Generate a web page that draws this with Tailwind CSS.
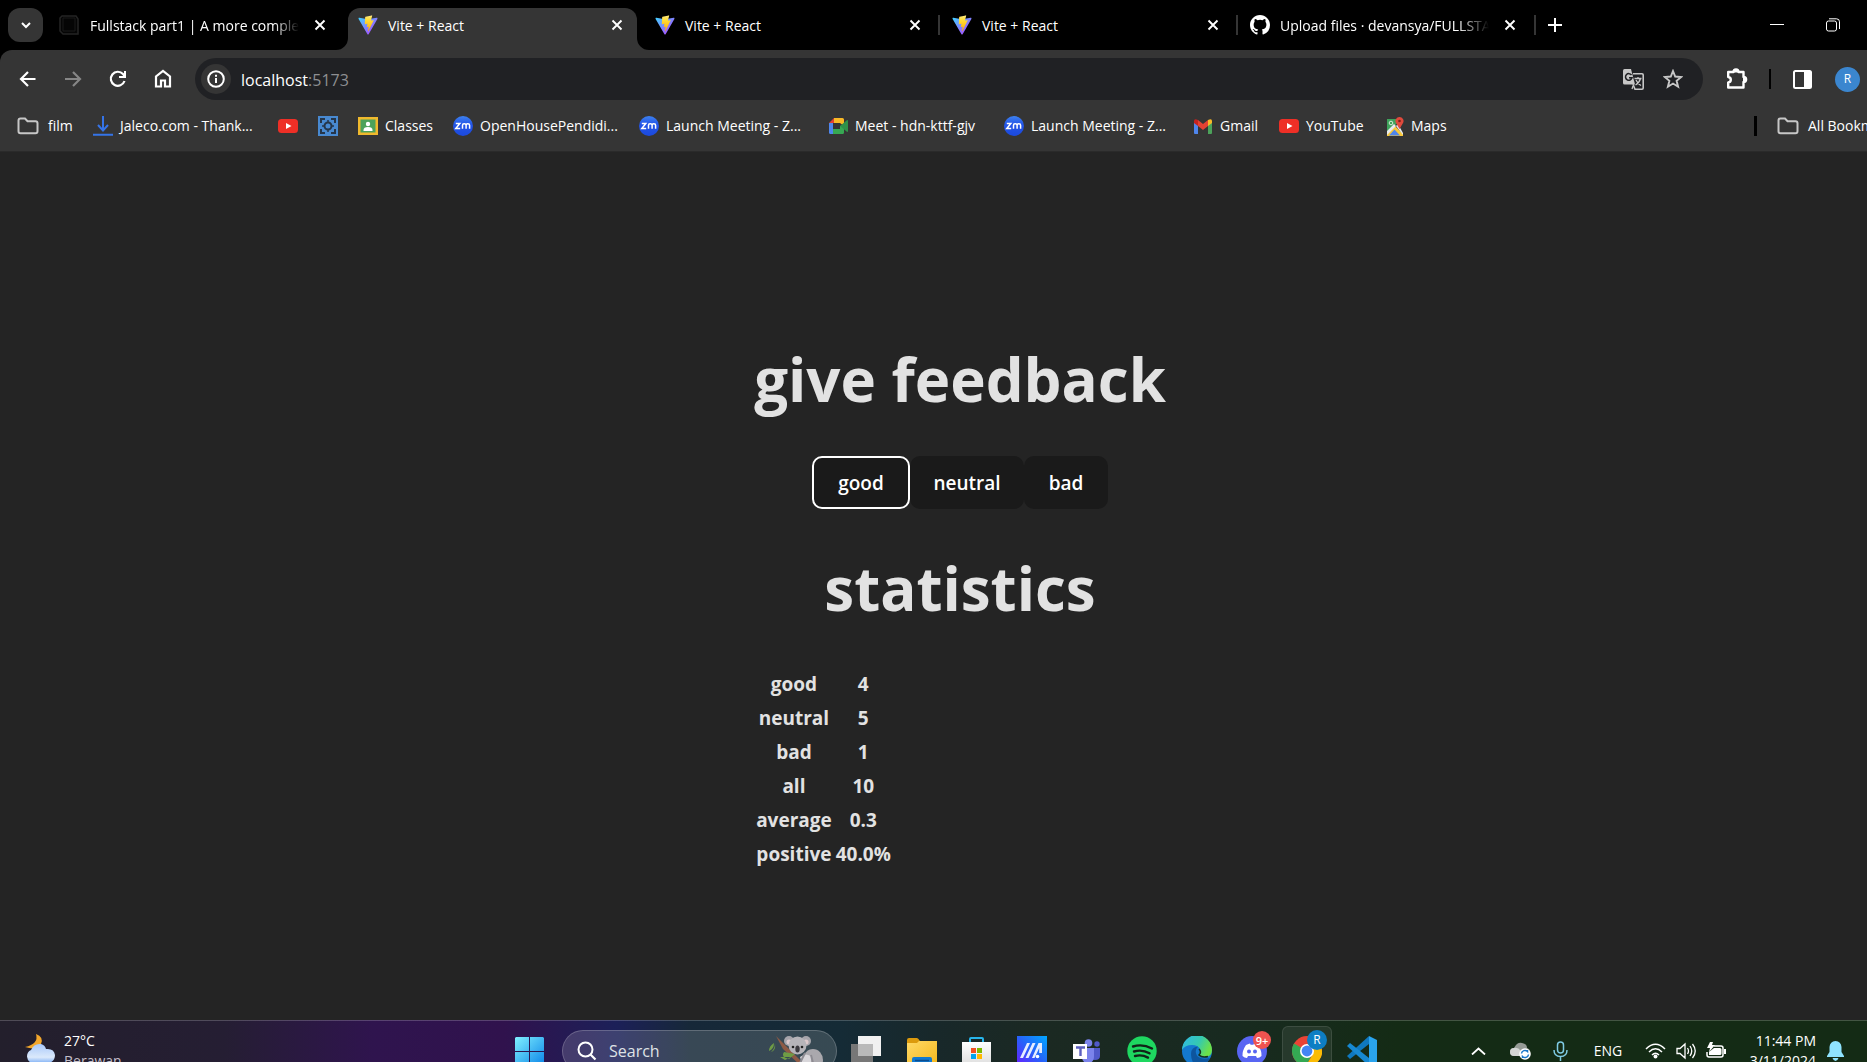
<!DOCTYPE html>
<html lang="en">
<head>
<meta charset="utf-8">
<title>Vite + React</title>
<script src="https://cdn.jsdelivr.net/npm/@tailwindcss/browser@4"></script>
</head>
<body class="flex h-screen flex-col overflow-hidden bg-black font-['Open_Sans',sans-serif] text-white">
<svg class="absolute size-0" aria-hidden="true">
  <defs>
    <linearGradient id="va" x1="0" y1="0" x2="1" y2="1"><stop offset="0" stop-color="#41d1ff"/><stop offset="1" stop-color="#bd34fe"/></linearGradient>
    <linearGradient id="vb" x1="0" y1="0" x2="0" y2="1"><stop offset="0" stop-color="#ffea83"/><stop offset=".3" stop-color="#ffdd35"/><stop offset="1" stop-color="#ffa800"/></linearGradient>
    <linearGradient id="zg" x1="0" y1="0" x2="0" y2="1"><stop offset="0" stop-color="#3d82f0"/><stop offset=".4" stop-color="#2456e8"/><stop offset="1" stop-color="#1b49dd"/></linearGradient>
    <linearGradient id="win" x1="0" y1="0" x2="1" y2="1"><stop offset="0" stop-color="#80f0ff"/><stop offset="1" stop-color="#0a84e8"/></linearGradient>
    <linearGradient id="cloud" x1="0" y1="0" x2="0" y2="1"><stop offset="0" stop-color="#a8c8fa"/><stop offset=".7" stop-color="#dbe9fb"/><stop offset="1" stop-color="#7fb0f5"/></linearGradient>
    <linearGradient id="asus" x1="0" y1="1" x2="1" y2="0"><stop offset="0" stop-color="#6a1cff"/><stop offset=".5" stop-color="#2762fa"/><stop offset="1" stop-color="#00a8ff"/></linearGradient>
    <linearGradient id="edge1" x1="0" y1="0" x2="1" y2=".4"><stop offset="0" stop-color="#2fb8e8"/><stop offset=".6" stop-color="#35c9b0"/><stop offset="1" stop-color="#6be04a"/></linearGradient>
    <linearGradient id="fold" x1="0" y1="0" x2="1" y2="1"><stop offset="0" stop-color="#ffd967"/><stop offset="1" stop-color="#f5b81c"/></linearGradient>
    <linearGradient id="bag" x1="0" y1="0" x2="0" y2="1"><stop offset="0" stop-color="#fff"/><stop offset="1" stop-color="#dcdcdc"/></linearGradient>
    <symbol id="vite" viewBox="0 0 32 32"><path fill="url(#va)" d="M31 6.2 17 30.6c-.4.7-1.500.7-1.900 0L1 6.200C.5 5.300 1.300 4.300 2.200 4.500l13.700 2.400 13.900-2.400c1-.2 1.700.8 1.200 1.700z"/><path fill="url(#vb)" d="m22 .6-10 2a.6.600 0 0 0-.5.500L10.900 14c0 .4.300.7.700.6l2.800-.6c.4-.1.700.2.600.6l-.8 4c-.1.400.2.700.6.600l1.700-.5c.400-.1.700.2.600.6l-1.300 6.300c-.1.500.500.700.7.300l8.500-17c.1-.400-.1-.800-.6-.700l-3 .6c-.4.100-.700-.200-.600-.6l1.900-7c.1-.400-.300-.800-.7-.6z"/></symbol>
    <symbol id="close" viewBox="0 0 12 12"><path d="M1.500 1.500l9 9M10.500 1.500l-9 9" stroke="#fff" stroke-width="1.900"/></symbol>
    <symbol id="folder" viewBox="0 0 22 18"><path d="M1.500 3.500q0-2 2-2H8l2.500 2.700h8q2 0 2 2v8q0 2-2 2h-15q-2 0-2-2z" fill="none" stroke="#c7c7c7" stroke-width="2"/></symbol>
    <symbol id="yt" viewBox="0 0 20 14"><rect width="20" height="14" rx="3.500" fill="#ee2f26"/><path d="M8 4l5.500 3L8 10z" fill="#fff"/></symbol>
    <symbol id="zm" viewBox="0 0 20 20"><circle cx="10" cy="10" r="10" fill="url(#zg)"/><path d="M2.800 7.500h4l-4 5h4.400M9.500 12.800V9.300q0-1.500 1.500-1.500h.4q1.700 0 1.700 1.500v3.500m0-3.500q0-1.500 1.500-1.500h.3q1.700 0 1.700 1.500v3.500" fill="none" stroke="#fff" stroke-width="1.500"/></symbol>
    <symbol id="github" viewBox="0 0 16 16"><path fill="#fff" d="M8 0C3.580 0 0 3.580 0 8c0 3.540 2.290 6.530 5.470 7.590.4.070.55-.17.550-.380 0-.190-.010-.820-.010-1.490-2.010.370-2.530-.490-2.690-.940-.090-.230-.480-.940-.820-1.130-.280-.150-.680-.520-.010-.530.630-.010 1.080.580 1.230.820.720 1.210 1.870.870 2.330.660.070-.520.280-.870.510-1.070-1.780-.2-3.640-.890-3.640-3.950 0-.870.310-1.590.820-2.150-.080-.2-.360-1.020.080-2.120 0 0 .670-.210 2.200.820a7.400 7.400 0 0 1 4 0c1.530-1.040 2.200-.820 2.200-.820.440 1.100.160 1.920.080 2.120.510.560.820 1.270.820 2.150 0 3.070-1.870 3.750-3.650 3.950.290.250.540.730.540 1.480 0 1.070-.010 1.930-.010 2.200 0 .210.150.460.550.380A8 8 0 0 0 16 8c0-4.420-3.580-8-8-8z"/></symbol>
  </defs>
</svg>

<!-- Tab strip -->
<header class="flex h-[50px] shrink-0 bg-black pl-2 text-sm">
  <button aria-label="Search tabs" class="mt-2 mr-1 flex h-[34px] w-[35px] shrink-0 items-center justify-center rounded-xl bg-[#353535]"><svg class="size-3" viewBox="0 0 12 12"><path d="M2 4l4 4 4-4" fill="none" stroke="#fff" stroke-width="2"/></svg></button>
  <nav class="flex [&_a]:pt-px">
    <div class="flex w-[301px] items-center pr-5 pl-3">
      <svg class="mr-[11px] size-5 shrink-0" viewBox="0 0 20 20"><path d="M3 1h14l2 3v15H4l-3-3V3z" fill="#050505" stroke="#242424" stroke-width="1.500"/><path d="M4 3h12v13H4z" fill="none" stroke="#1a1a1a"/></svg>
      <a href="#" class="w-[209px] overflow-hidden [mask-image:linear-gradient(to_right,#000_88%,transparent)] whitespace-nowrap">Fullstack part1 | A more complex</a>
      <button aria-label="Close tab" class="ml-[15px]"><svg class="size-3"><use href="#close"/></svg></button>
    </div>
    <div class="relative mt-2 flex w-[289px] items-center rounded-t-xl bg-[#353535] pr-[14px] pb-2 pl-[10px]">
      <svg class="absolute bottom-0 -left-3 size-3" viewBox="0 0 12 12"><path d="M12 0v12H0A12 12 0 0 0 12 0" fill="#353535"/></svg>
      <svg class="absolute -right-3 bottom-0 size-3" viewBox="0 0 12 12"><path d="M0 0v12h12A12 12 0 0 1 0 0" fill="#353535"/></svg>
      <svg class="mr-[10px] size-5"><use href="#vite"/></svg><a href="#" class="grow">Vite + React</a>
      <button aria-label="Close tab"><svg class="size-3"><use href="#close"/></svg></button>
    </div>
    <div class="flex w-[303px] items-center pl-[18px]">
      <svg class="mr-[10px] size-5"><use href="#vite"/></svg><a href="#" class="grow">Vite + React</a>
      <button aria-label="Close tab"><svg class="size-3"><use href="#close"/></svg></button>
      <span class="ml-[17px] h-5 w-[2px] bg-[#353535]"></span>
    </div>
    <div class="flex w-[298px] items-center pl-[12px]">
      <svg class="mr-[10px] size-5"><use href="#vite"/></svg><a href="#" class="grow">Vite + React</a>
      <button aria-label="Close tab"><svg class="size-3"><use href="#close"/></svg></button>
      <span class="ml-[17px] h-5 w-[2px] bg-[#353535]"></span>
    </div>
    <div class="flex w-[298px] items-center pl-[12px]">
      <svg class="mr-[10px] size-5 shrink-0"><use href="#github"/></svg><a href="#" class="w-[209px] overflow-hidden [mask-image:linear-gradient(to_right,#000_85%,transparent)] whitespace-nowrap">Upload files · devansya/FULLSTA</a>
      <button aria-label="Close tab" class="ml-[15px]"><svg class="size-3"><use href="#close"/></svg></button>
      <span class="ml-auto h-5 w-[2px] bg-[#353535]"></span>
    </div>
  </nav>
  <button aria-label="New tab" class="ml-3"><svg class="size-[14px]" viewBox="0 0 14 14"><path d="M7 0v14M0 7h14" stroke="#fff" stroke-width="2"/></svg></button>
  <div class="ml-auto flex items-center gap-[42px] pr-[27px]">
    <button aria-label="Minimize"><svg class="size-[14px]" viewBox="0 0 14 14"><path d="M0 6.500h14" stroke="#fff"/></svg></button>
    <button aria-label="Restore"><svg class="size-[14px]" viewBox="0 0 14 14"><rect x=".5" y="3" width="10" height="10" rx="2" fill="none" stroke="#fff"/><path d="M3 .8h7.500q3 0 3 3V11" fill="none" stroke="#fff"/></svg></button>
  </div>
</header>

<!-- Toolbar and bookmarks -->
<section class="shrink-0 overflow-hidden rounded-tl-xl border-b border-[#2a2a2a] bg-[#353535] pt-2">
  <div class="flex h-[42px] items-center pr-[7px] pl-[18px]">
    <div class="flex w-[177px] gap-[25px]">
      <button aria-label="Back"><svg class="size-5" viewBox="0 0 20 20"><path d="M17.500 10H3M10 3l-7 7 7 7" fill="none" stroke="#fff" stroke-width="2.200"/></svg></button>
      <button aria-label="Forward"><svg class="size-5" viewBox="0 0 20 20"><path d="M2 10h15M10 3l7 7-7 7" fill="none" stroke="#868686" stroke-width="2.200"/></svg></button>
      <button aria-label="Reload"><svg class="size-5" viewBox="0 0 20 20"><path d="M16.500 12A7 7 0 1 1 15 5l2 2.500" fill="none" stroke="#fff" stroke-width="2.200"/><path d="M18 2v7h-7V7h5V2z" fill="#fff"/></svg></button>
      <button aria-label="Home"><svg class="size-5" viewBox="0 0 20 20"><path d="M3 17.500V7.500L10 2l7 5.500v10h-5v-6H8v6z" fill="none" stroke="#fff" stroke-width="2.200"/></svg></button>
    </div>
    <div class="flex h-[42px] grow items-center rounded-full bg-[#202124] pr-5 pl-[6px]">
      <button aria-label="View site information" class="mr-[10px] flex size-[30px] items-center justify-center rounded-full bg-[#353535]"><svg class="size-[18px]" viewBox="0 0 18 18"><circle cx="9" cy="9" r="7.800" fill="none" stroke="#fff" stroke-width="2"/><path d="M9 8v5M9 4.800v2" stroke="#fff" stroke-width="2"/></svg></button>
      <div class="grow pt-px text-base" role="textbox" aria-label="Address">localhost<span class="text-[#8e8f92]">:5173</span></div>
      <button aria-label="Translate" class="mr-[19px]"><svg class="size-[21px]" viewBox="0 0 21 21"><path d="M10 4.800h9q1.200 0 1.200 1.200v13q0 1.200-1.200 1.200h-7l-2-5" fill="none" stroke="#c7c7c7" stroke-width="1.600"/><path d="M1.500 0H8l4 15.500H1.500Q0 15.500 0 14V1.500Q0 0 1.500 0z" fill="#c7c7c7"/><path d="M8.500 6A3.300 3.300 0 1 0 9 8.800H6" fill="none" stroke="#202124" stroke-width="1.500"/><path d="M11.500 9.500h7M15 8v1.500M17.500 9.500q-1 4-5 6.500M13 11q1.500 3.500 5 5.500M10 17l-1 3" fill="none" stroke="#c7c7c7" stroke-width="1.300"/></svg></button>
      <button aria-label="Bookmark this tab"><svg class="size-5" viewBox="0 0 20 20"><path d="M10 2l2.200 5.500 6 .5-4.600 3.800 1.500 5.900L10 14.500l-5.100 3.200 1.500-5.900L1.800 8l6-.5z" fill="none" stroke="#c7c7c7" stroke-width="1.900"/></svg></button>
    </div>
    <button aria-label="Extensions" class="ml-[23px]"><svg class="size-[22px]" viewBox="0 0 22 22"><path d="M2.200 4h5.300q0-2.600 2.500-2.600T12.500 4h5v5q2.600 0 2.600 2.500T17.500 14v5.500H2.200v-5q2.600-.4 2.600-2.800T2.200 9z" fill="none" stroke="#fff" stroke-width="2.400" stroke-linejoin="round"/><path d="M8 4.500q0-3 2-3t2 3zM17 9.500q3 0 3 2t-3 2z" fill="#fff"/></svg></button>
    <span class="mr-[22px] ml-[21px] h-5 w-[2px] bg-black"></span>
    <button aria-label="Side panel"><svg class="w-[19px]" viewBox="0 0 19 19"><rect x="1" y="1" width="17" height="17" rx="1.500" fill="none" stroke="#fff" stroke-width="2"/><path d="M11 1h7v17h-7z" fill="#fff"/></svg></button>
    <button aria-label="Profile" class="ml-[23px] size-[25px] shrink-0 rounded-full bg-[#3b86cf] text-xs">R</button>
  </div>
  <nav aria-label="Bookmarks" class="flex h-[51px] items-center pt-px pl-[17px] text-sm whitespace-nowrap [&>a]:flex [&>a]:shrink-0 [&>a]:items-center [&>a]:gap-[7px]">
    <a href="#" class="w-[76px]"><svg class="mr-[2px] h-[18px] w-[22px]"><use href="#folder"/></svg>film</a>
    <a href="#" class="w-[185px]"><svg class="size-5" viewBox="0 0 20 20"><path d="M10 0v13M5 9l5 5.500L15 9M0 18.800h20" fill="none" stroke="#3574e8" stroke-width="2"/></svg>Jaleco.com - Thank...</a>
    <a href="#" class="w-10" aria-label="YouTube"><svg class="h-[14px] w-5"><use href="#yt"/></svg></a>
    <a href="#" class="w-10" aria-label="Capture"><svg class="size-5" viewBox="0 0 20 20"><path fill="#4889d0" d="M0 0h20v20H0z"/><path d="M3 7V3h4M13 3h4v4M17 13v4h-4M7 17H3v-4" fill="none" stroke="#25364a" stroke-width="2"/><circle cx="10" cy="10" r="3.500" fill="none" stroke="#25364a" stroke-width="2"/><path d="M10 4v3M10 13v3M4 10h3M13 10h3" stroke="#25364a" stroke-width="1.500"/></svg></a>
    <a href="#" class="w-[95px]"><svg class="h-[18px] w-5" viewBox="0 0 20 18"><path fill="#f0b92d" d="M0 0h20v18H0z"/><path fill="#4ca25a" d="M2.500 2.500h15v13h-15z"/><circle cx="10" cy="7" r="2.200" fill="#fff"/><path fill="#fff" d="M5.500 13q0-3 4.500-3t4.500 3v1h-9z"/></svg>Classes</a>
    <a href="#" class="w-[186px]"><svg class="size-5"><use href="#zm"/></svg>OpenHousePendidi...</a>
    <a href="#" class="w-[190px]"><svg class="size-5"><use href="#zm"/></svg>Launch Meeting - Z...</a>
    <a href="#" class="w-[175px]"><svg class="h-4 w-[19px]" viewBox="0 0 19 16"><path fill="#4f86ec" d="M0 5h4v11H1.500Q0 16 0 14.500z"/><path fill="#e34133" d="M5 0v5H0z"/><path fill="#f9b927" d="M5 0h8.500Q15 0 15 1.500V8l-4-3H5z"/><path fill="#37a853" d="M4 11h7V8l4-1v7.500q0 1.500-1.500 1.500H4z"/><path fill="#2f9149" d="M11 8l6.500-5.500q1.500-1 1.500.5v10q0 1.500-1.500.5z"/></svg>Meet - hdn-kttf-gjv</a>
    <a href="#" class="w-[189px]"><svg class="size-5"><use href="#zm"/></svg>Launch Meeting - Z...</a>
    <a href="#" class="w-[86px]"><svg class="h-[15px] w-5" viewBox="0 0 20 15"><path fill="#4f86ec" d="M1 3l4 3v9H2q-1 0-1-1z"/><path fill="#4ca25a" d="M15 6l4-3v11q0 1-1 1h-3z"/><path fill="#e34133" d="M5 1l5 4 5-4v6l-5 4-5-4z"/><path fill="#c5221f" d="M1 2q0-3 4-1v6L1 4z"/><path fill="#f9b927" d="M19 2q0-3-4-1v6l4-3z"/></svg>Gmail</a>
    <a href="#" class="w-[107px]"><svg class="h-[14px] w-5"><use href="#yt"/></svg>YouTube</a>
    <a href="#"><svg class="h-[19px] w-[18px]" viewBox="0 0 18 19"><path fill="#3fa35b" d="M1 2h14L1 17z"/><path fill="#f9c93a" d="M1 15l7-7 9 9v2H1z"/><path fill="#4f86ec" d="M3 18.500l5.500-6 5.500 6z"/><path fill="#e8eaed" d="M1 14l7-7 2 2-9 9zM10 9l2-2 5 9v2z"/><circle cx="5" cy="6" r="1.800" fill="none" stroke="#d5ecd8"/><path fill="#e04a3c" d="M13.500 0A4 4 0 0 1 17 6l-3.500 6L10 6a4 4 0 0 1 3.500-6z"/><circle cx="13.500" cy="4" r="1.300" fill="#7c2019"/></svg>Maps</a>
    <span class="ml-auto h-5 w-[3px] shrink-0 bg-black"></span>
    <a href="#" class="ml-[20px] w-[90px] overflow-hidden"><svg class="mr-[2px] h-[18px] w-[22px] shrink-0"><use href="#folder"/></svg>All Bookmarks</a>
  </nav>
</section>

<!-- Application -->
<main class="flex min-h-0 grow justify-center overflow-hidden bg-[#242424] pt-[192px] pl-[53px] font-bold text-[#e2e2e2]">
  <div>
    <h1 class="text-center text-[60px] leading-[70px]">give feedback</h1>
    <div class="mt-[42px] flex justify-center text-[19px] leading-[29px] font-semibold text-white">
      <button class="w-[98px] rounded-[10px] bg-[#1a1a1a] pt-[13px] pb-[11px] outline-2 -outline-offset-2 outline-white">good</button>
      <button class="w-[114px] rounded-[10px] bg-[#1a1a1a] pt-[13px] pb-[11px]">neutral</button>
      <button class="w-[84px] rounded-[10px] bg-[#1a1a1a] pt-[13px] pb-[11px]">bad</button>
    </div>
    <h1 class="mt-[44px] text-center text-[60px] leading-[70px]">statistics</h1>
    <table class="mt-[44px] text-center text-[19px] leading-[30px]">
      <tbody>
        <tr><td class="px-[2px] py-[2px]">good</td><td class="px-[2px]">4</td></tr>
        <tr><td class="px-[2px] py-[2px]">neutral</td><td class="px-[2px]">5</td></tr>
        <tr><td class="px-[2px] py-[2px]">bad</td><td class="px-[2px]">1</td></tr>
        <tr><td class="px-[2px] py-[2px]">all</td><td class="px-[2px]">10</td></tr>
        <tr><td class="px-[2px] py-[2px]">average</td><td class="px-[2px]">0.3</td></tr>
        <tr><td class="px-[2px] py-[2px]">positive</td><td class="px-[2px]">40.0%</td></tr>
      </tbody>
    </table>
  </div>
</main>

<!-- Taskbar -->
<footer class="h-[42px] shrink-0 overflow-hidden border-t border-white/20 bg-[linear-gradient(90deg,#231f2c_0%,#251e33_12%,#2f144e_20%,#30124d_27%,#1c2058_33%,#162838_37%,#152b36_45%,#18282a_50%,#1b2922_56%,#182a20_66%,#142b15_75%,#142b15_100%)]">
  <div class="flex h-[60px] items-center">
    <button class="flex w-[490px] items-center gap-[9px] pb-px pl-[25px] text-left text-sm leading-[20px]">
      <svg class="h-[34px] w-[30px]" viewBox="0 0 30 34"><path d="M11 0q8 3 5 10-3 7-16 3Q14 10 11 0z" fill="#f3a72c"/><path d="M7 29a7 7 0 0 1-1-13q3-7 10-6 4 1 5 5 8-1 9 6 0 7-7 8z" fill="url(#cloud)"/></svg>
      <span>27°C<br><span class="text-[#c4bfca]">Berawan</span></span>
    </button>
    <div class="flex items-center">
      <button aria-label="Start" class="ml-[25px]"><svg class="size-[29px]" viewBox="0 0 29 29"><path fill="url(#win)" d="M1 0h13v14H0V1zM15 0h13l1 1v13H15zM0 15h14v14H1l-1-1zM15 15h14v13l-1 1H15z"/></svg></button>
      <label class="ml-[18px] flex h-[42px] w-[275px] items-center rounded-full border border-white/20 bg-white/15 pl-[14px]">
        <svg class="mr-[12px] size-5 shrink-0" viewBox="0 0 20 20"><circle cx="8.500" cy="8.500" r="7" fill="none" stroke="#fff" stroke-width="2"/><path d="M13.500 13.500l5 5" stroke="#fff" stroke-width="2.200"/></svg>
        <input aria-label="Search" placeholder="Search" class="w-[140px] bg-transparent text-base outline-none placeholder:text-[#dfe2e6]">
        <svg class="ml-[20px] h-[32px] w-[54px] shrink-0" viewBox="0 0 54 32"><path d="M7 1l9 9 20 20-3 2L14 14z" fill="#8e5a45"/><path d="M5 8q-5 3-5 8 5-2 5-8zM6 8q0 6-4 9 5-1 4-9zM15 17q-4 5 5 7l6-5q-5-1-11-2zM11 22h11l-6 3z" fill="#6f9c45"/><ellipse cx="44" cy="25" rx="10" ry="11" fill="#aaa8ad"/><circle cx="20" cy="6" r="5" fill="#a7a5ab"/><circle cx="37" cy="6" r="5" fill="#a7a5ab"/><circle cx="20" cy="7" r="2.500" fill="#dcc9cc"/><circle cx="37" cy="7" r="2.500" fill="#dcc9cc"/><ellipse cx="28.500" cy="10.500" rx="9" ry="9" fill="#b6b4b9"/><circle cx="24" cy="12" r="1.300" fill="#222"/><circle cx="33" cy="12" r="1.300" fill="#222"/><ellipse cx="28.500" cy="14" rx="2.200" ry="3.500" fill="#3c3a40"/><path d="M31 22q6-5 12 0l-2 10h-7z" fill="#d8d6da"/><path d="M36 18l-6 12M42 20l3 12" stroke="#8d8b92" stroke-width="2"/></svg>
      </label>
      <button aria-label="Task view" class="ml-[14px]"><svg class="size-[30px]" viewBox="0 0 30 30"><path d="M7 0h23v20H7z" fill="#f1f1f1"/><path d="M0 8h22v20H0z" fill="#777"/><path d="M7 8h15v12H7z" fill="#b9b9b9"/></svg></button>
      <button aria-label="File Explorer" class="ml-[26px]"><svg class="size-[30px]" viewBox="0 0 30 30"><path d="M0 4q0-2 2-2h8q1 0 3 3h15q2 0 2 2v4H0z" fill="#dc9a0d"/><path d="M0 7h10l2-2h18v24H0z" fill="url(#fold)"/><path d="M5 30V23q0-2 2-2h16q2 0 2 2v7z" fill="#1279cf"/><path d="M8 24.500h14" stroke="#0b4d90" stroke-width="1.500"/></svg></button>
      <button aria-label="Microsoft Store" class="ml-[25px]"><svg class="size-[29px]" viewBox="0 0 29 29"><path d="M8 6V2q0-1 1-1h11q1 0 1 1v4" fill="none" stroke="#27b5eb" stroke-width="2"/><path d="M0 5h29v21q0 3-3 3H3q-3 0-3-3z" fill="url(#bag)"/><path fill="#f25022" d="M9 11h5v5H9z"/><path fill="#7fba00" d="M15 11h5v5h-5z"/><path fill="#00a4ef" d="M9 17h5v5H9z"/><path fill="#ffb900" d="M15 17h5v5h-5z"/></svg></button>
      <button aria-label="MyASUS" class="ml-[26px]"><svg class="size-[30px]" viewBox="0 0 30 30"><path fill="url(#asus)" d="M0 0h30v30H0z"/><path d="M3 22L10 7h3L6 22zM8.500 22L15.500 7h3l-7 15zM15 22L21.500 7H25v10h-2.800v-5L17.500 22z" fill="#e6edff"/><circle cx="20.500" cy="20.500" r="1.800" fill="#fff"/></svg></button>
      <button aria-label="Teams" class="ml-[26px]"><svg class="h-[24px] w-[28px]" viewBox="0 0 28 24"><circle cx="15.500" cy="4" r="3.800" fill="#7b83eb"/><circle cx="24" cy="5" r="2.700" fill="#5059c9"/><path d="M18 9h9v8q0 4-5 4t-5-4z" fill="#5059c9"/><path d="M9 9h12v8q0 7-6 7t-6-6z" fill="#7b83eb"/><path d="M0 5h14v15H0z" fill="#fff"/><path d="M3 8.500h9M7.500 8.500V17" stroke="#5c5fbf" stroke-width="2.400"/></svg></button>
      <button aria-label="Spotify" class="ml-[26px]"><svg class="size-[30px]" viewBox="0 0 30 30"><circle cx="15" cy="15" r="14.700" fill="#1ed760"/><path d="M6 10.500q9.500-3 19 2M7 15.500q8-2.500 15.500 1.800M8 20q7-1.800 13 1.600" fill="none" stroke="#112318" stroke-width="2.400" stroke-linecap="round"/></svg></button>
      <button aria-label="Edge" class="ml-[25px]"><svg class="size-[30px]" viewBox="0 0 30 30"><circle cx="15" cy="15" r="15" fill="#1479cf"/><path d="M0 14A15 15 0 0 1 30 14q0 7-7 7-6 0-6-3 2-2 1-5-2-4-8-4Q3 9 0 14z" fill="url(#edge1)"/><path d="M9 18q0-7 7-7.500-3 3-2 7 2 7 14 4.500-4 8-13 8-6-3-6-12z" fill="#0d559e"/><path d="M17 13q3 3 0 6 3 3 9 1.500" fill="none" stroke="#173020" stroke-width="1.500"/></svg></button>
      <button aria-label="Discord" class="relative ml-[25px]"><svg class="size-[30px]" viewBox="0 0 30 30"><circle cx="15" cy="15" r="15" fill="#5865f2"/><path d="M9 9q3-1.500 4-1.500l.6 1.200h2.800L17 7.500q1 0 4 1.500 4 6 3.500 11-2 1.800-4.500 2l-1-2h-8l-1 2q-2.500-.2-4.500-2Q5 15 9 9z" fill="#fff"/><circle cx="12" cy="15.500" r="2" fill="#5865f2"/><circle cx="18" cy="15.500" r="2" fill="#5865f2"/></svg><span class="absolute -top-[5px] -right-[4px] flex size-[18px] items-center justify-center rounded-full bg-[#ef5350] text-[11px] leading-none font-semibold">9+</span></button>
      <button aria-label="Chrome" class="relative ml-[15px] flex size-[50px] items-center justify-center rounded-md border border-white/10 bg-white/7"><svg class="size-[30px]" viewBox="0 0 30 30"><circle cx="15" cy="15" r="15" fill="#ea4335"/><path d="M15 15L2 7.500A15 15 0 0 0 14 30l6-11z" fill="#34a853"/><path d="M15 15h14.900Q30 8 29 9A15 15 0 0 1 14 30l7-12z" fill="#fbbc05"/><path d="M18 8h10a15 15 0 0 1 2 7H18z" fill="#fbbc05"/><circle cx="15" cy="15" r="7" fill="#fff"/><circle cx="15" cy="15" r="5.400" fill="#4285f4"/></svg><span class="absolute top-[3px] right-[4px] flex size-[20px] items-center justify-center rounded-full bg-[#0d7ec4] text-xs">R</span></button>
      <button aria-label="Visual Studio Code" class="ml-[15px]"><svg class="size-[30px]" viewBox="0 0 30 30"><path d="M22 0l8 4v22l-8 4z" fill="#2aa4ee"/><path d="M22 0v8L3 23 0 20z" fill="#0f78bf"/><path d="M3 7l19 15v8L0 10z" fill="#1788d1"/></svg></button>
    </div>
    <div class="ml-auto flex items-center pb-px text-sm">
      <button aria-label="Show hidden icons" class="mr-[24px]"><svg class="h-2 w-[15px]" viewBox="0 0 15 8"><path d="M1 7.500l6.500-6 6.500 6" fill="none" stroke="#fff" stroke-width="1.800"/></svg></button>
      <button aria-label="OneDrive" class="mr-[22px]"><svg class="h-[18px] w-[21px]" viewBox="0 0 21 18"><path d="M4 14a4 4 0 0 1 0-8Q7 0 12 1q5 1 5 5 3 1 3 4t-3 4z" fill="#969b96"/><path d="M4 14a4 4 0 0 1 0-8q4-1 7 3v5z" fill="#d4d6d4"/><circle cx="15" cy="12" r="5.800" fill="#fff"/><path d="M11.500 11.500a3.500 3.500 0 0 1 6-2V8M18.500 12.500a3.500 3.500 0 0 1-6 2V16" fill="none" stroke="#1674c8" stroke-width="1.500"/></svg></button>
      <button aria-label="Microphone" class="mr-[25px]"><svg class="h-5 w-[15px]" viewBox="0 0 15 20"><rect x="4.500" y="1" width="6" height="11" rx="3" fill="none" stroke="#7fcbe4" stroke-width="1.500"/><path d="M1 9q0 6.500 6.500 6.500T14 9M7.500 15.500V20" fill="none" stroke="#7fcbe4" stroke-width="1.500"/></svg></button>
      <button class="mr-[22px] w-[30px]">ENG</button>
      <button aria-label="Network, sound and battery" class="mr-[14px] flex items-center gap-[10px]">
        <svg class="h-4 w-[21px]" viewBox="0 0 21 16"><path d="M1 6q9.500-9.500 19 0M4 9q6.500-6.500 13 0M7 12q3.500-3.500 7 0" fill="none" stroke="#fff" stroke-width="1.500"/><circle cx="10.500" cy="13.500" r="2" fill="#fff"/></svg>
        <svg class="h-[18px] w-[20px]" viewBox="0 0 20 18"><path d="M1 6.500h3l5-4.500v14l-5-4.500H1zM11.500 6q2 3 0 6M14 4q3.500 5 0 10M16.500 2q5.500 7 0 14" fill="none" stroke="#fff" stroke-width="1.300"/></svg>
        <svg class="h-[18px] w-[20px]" viewBox="0 0 20 18"><path d="M8 4h7q2 0 2 2v7q0 2-2 2H3q-2 0-2-2v-3" fill="none" stroke="#fff" stroke-width="1.500"/><path d="M3 13v-3l5-4h6q1.500 0 1.500 1.500v4q0 1.500-1.500 1.500zM18 7h2v5h-2zM4 0h3L6 3h3L3 10l1-4H1z" fill="#fff"/></svg>
      </button>
      <button class="w-[76px] text-right leading-[20px] whitespace-nowrap">11:44 PM<br>3/11/2024</button>
      <button aria-label="Notifications" class="mr-[23px] ml-[11px]"><svg class="h-[20px] w-[17px]" viewBox="0 0 17 20"><path d="M8.500 0Q14 .5 14.500 6v5l2.500 4v1H0v-1l2.500-4V6Q3 .5 8.500 0zM5.500 17h6q-1 3-3 3t-3-3z" fill="#8fe3ff"/></svg></button>
    </div>
  </div>
</footer>
</body>
</html>
